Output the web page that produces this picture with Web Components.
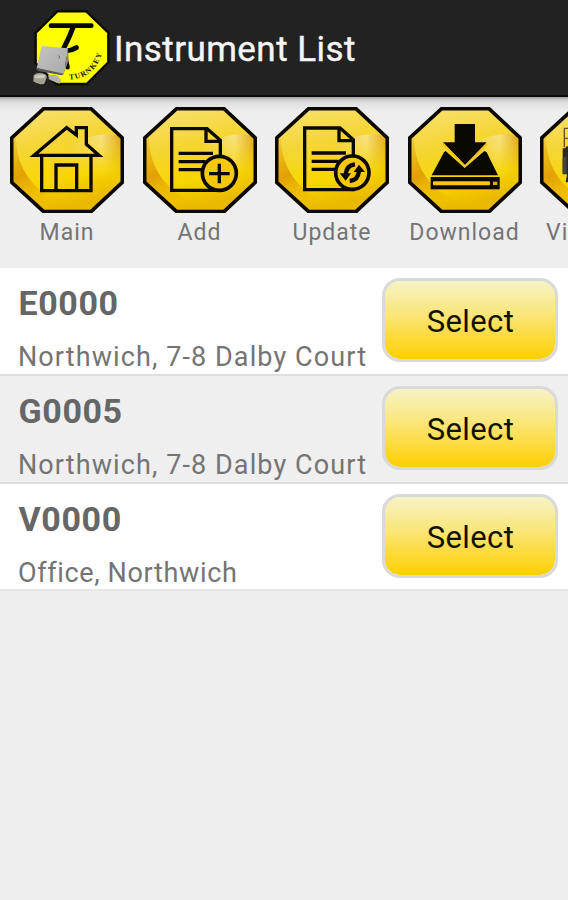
<!DOCTYPE html>
<html lang="en">
<head>
<meta charset="utf-8">
<title>Instrument List</title>
<style>
  html, body {
    margin: 0;
    height: 900px;
    overflow: hidden;
    background: #eeeeee;
    font-family: Roboto, "Liberation Sans", sans-serif;
  }
</style>
</head>
<body>
<instrument-app></instrument-app>

<script>
const page = 'M116 101 H222 L262 136 V286 H116 Z';
const arrow = `
  <path d="M270 208 Q245 210 242 238" fill="none" stroke="#0b0800" stroke-width="13"/>
  <path d="M224 235 H258 L242 257 Z" fill="#0b0800"/>`;

const icons = {
  main: `
    <g fill="none" stroke="#0b0800" stroke-width="10">
      <path d="M125 184 V287 H273 V184"/>
      <path d="M168 287 V210 H230 V287"/>
      <path d="M102 181 H297 L259 148 V98 H229 V120 L200 98 Z"/>
    </g>`,
  add: `
    <g fill="none" stroke="#0b0800" stroke-width="10">
      <path d="${page}"/>
      <path d="M219 101 V139 H262"/>
      <path d="M137 175 H240 M137 200 H218 M137 224 H207"/>
      <circle cx="259" cy="235" r="51" fill="#f5c90a" stroke-width="11"/>
      <path d="M228 236 H290 M259 206 V265"/>
    </g>`,
  update: `
    <g fill="none" stroke="#0b0800" stroke-width="10">
      <g transform="translate(3 -2)">
        <path d="${page}"/>
        <path d="M219 101 V139 H262"/>
        <path d="M137 176 H240 M137 201 H218 M137 225 H207"/>
      </g>
      <circle cx="262" cy="233" r="50" fill="#f5c90a" stroke-width="11"/>
    </g>
    ${arrow}
    <g transform="rotate(180 262 233)">${arrow}</g>`,
  download: `
    <path d="M143 168 L200 219 L259 168 L266 172 L300 241 H101 L138 172 Z" fill="#0b0800"/>
    <path d="M170 87 H231 V142 H266 L201 211 L135 142 H170 Z" fill="#0b0800"/>
    <path d="M135 146 L201 213 L268 146" fill="none" stroke="#edc21b" stroke-width="5"/>
    <rect x="98" y="246" width="207" height="37" fill="#0b0800"/>
    <rect x="105" y="259" width="171" height="12" rx="3" fill="#f3c716"/>
    <rect x="285" y="260" width="13" height="10" fill="#d5ad16"/>`,
  view: `
    <path d="M126 100 H103 V157 M103 130 H126" fill="none" stroke="#6a5510" stroke-width="4"/>
    <path d="M98 160 H105 L110 154 H240 V238 H120 L116 262 H107 L111 238 H98 Z" fill="#2b2822"/>
    <path d="M98 190 L110 182 V236 H98 Z" fill="#45423d"/>`
};

class TurnkeyLogo extends HTMLElement {
  constructor() {
    super();
    this.attachShadow({ mode: 'open' });
    this.shadowRoot.innerHTML = `
      <style>
        :host { display: block; width: 84px; height: 84px; }
        svg { display: block; width: 100%; height: 100%; }
        text { font: bold 23px "Liberation Serif", serif; letter-spacing: 3.2px; fill: #181800; }
      </style>
      <svg viewBox="0 0 252 252">
        <defs>
          <path id="arc" d="M124 223 A97 97 0 0 0 222 112"/>
          <linearGradient id="box" x1="0" y1="0" x2="1" y2="1">
            <stop offset="0" stop-color="#c4c4c4"/>
            <stop offset="1" stop-color="#a9a9a9"/>
          </linearGradient>
        </defs>
        <path d="M88 19 H175 L241 83 V172 L176 237 H85 L23 174 V84 Z" fill="#ffff00" stroke="#080800" stroke-width="7"/>
        <path d="M69 62 H190" stroke="#080800" stroke-width="14" stroke-linecap="round"/>
        <path d="M136 65 Q124 98 108 128 M110 137 Q128 139 145 128" fill="none" stroke="#080800" stroke-width="15" stroke-linecap="round"/>
        <path d="M113 160 L119 187" stroke="#080800" stroke-width="13" stroke-linecap="round"/>
        <path d="M41 123 L120 130 L107 207 L26 190 Z" fill="url(#box)"/>
        <path d="M120 130 L122 165 L107 207 Z" fill="#898989"/>
        <path d="M24 188 L108 206 L102 211 L30 198 Z" fill="#595959"/>
        <path d="M17 211 Q28 198 52 208 L57 215 L49 236 Q32 242 16 229 Z" fill="#a2a094"/>
        <path d="M19 213 Q35 205 52 211 L48 220 L22 220 Z" fill="#cbc9bd"/>
        <path d="M60 211 L84 209 L100 225 L95 236 L82 232 L63 223 Z" fill="#b5b3a7"/>
        <path d="M91 152 l5 4 l-4 5" fill="none" stroke="#6b6b6b" stroke-width="3"/>
        <text><textPath href="#arc">TURNKEY</textPath></text>
      </svg>`;
  }
}
customElements.define('turnkey-logo', TurnkeyLogo);

class ActionBar extends HTMLElement {
  constructor() {
    super();
    this.attachShadow({ mode: 'open' });
    this.shadowRoot.innerHTML = `
      <style>
        :host {
          display: flex;
          align-items: flex-start;
          gap: 2px;
          box-sizing: border-box;
          height: 97px;
          padding: 5px 0 0 28px;
          background: #222222;
          border-bottom: 2px solid #0b0b0b;
        }
        .title {
          margin-top: 24px;
          font-size: 35px;
          line-height: 42px;
          letter-spacing: 0.45px;
          color: #f5f5f5;
          -webkit-text-stroke: 0.4px #f5f5f5;
          white-space: nowrap;
        }
      </style>
      <turnkey-logo></turnkey-logo>
      <div class="title"><slot></slot></div>`;
  }
}
customElements.define('action-bar', ActionBar);

class ToolButton extends HTMLElement {
  connectedCallback() {
    this.attachShadow({ mode: 'open' });
    this.shadowRoot.innerHTML = `
      <style>
        :host {
          display: flex;
          flex: 0 0 132.5px;
          flex-direction: column;
          align-items: center;
        }
        svg { display: block; width: 114px; height: 106px; }
        .label {
          margin-top: 6px;
          font-size: 23px;
          line-height: 28px;
          letter-spacing: 1px;
          color: #747474;
          white-space: nowrap;
        }
      </style>
      <svg viewBox="30 36 342 318">
        <defs>
          <linearGradient id="base" x1="0" y1="0" x2="0.25" y2="1">
            <stop offset="0" stop-color="#f8e37a"/>
            <stop offset="0.4" stop-color="#f5d636"/>
            <stop offset="0.75" stop-color="#f8d600"/>
            <stop offset="1" stop-color="#e9b800"/>
          </linearGradient>
          <linearGradient id="left" x1="0" y1="0" x2="0.35" y2="1">
            <stop offset="0" stop-color="#e0a000" stop-opacity="0.1"/>
            <stop offset="0.55" stop-color="#dc9200" stop-opacity="0.8"/>
            <stop offset="1" stop-color="#eeb800" stop-opacity="0.2"/>
          </linearGradient>
          <linearGradient id="right" x1="0" y1="0" x2="1" y2="0">
            <stop offset="0" stop-color="#f0c840" stop-opacity="0"/>
            <stop offset="0.7" stop-color="#fae7a8" stop-opacity="0.75"/>
            <stop offset="1" stop-color="#d08c00" stop-opacity="0.8"/>
          </linearGradient>
          <linearGradient id="fade" x1="0" y1="0" x2="0" y2="1">
            <stop offset="0" stop-color="#fff"/>
            <stop offset="1" stop-color="#000"/>
          </linearGradient>
          <mask id="fademask"><rect x="150" y="110" width="222" height="140" fill="url(#fade)"/></mask>
          <clipPath id="clip"><path d="M131 41 H273 L367 129 V262 L273 350 H131 L35 262 V129 Z"/></clipPath>
        </defs>
        <g clip-path="url(#clip)">
          <rect x="30" y="36" width="342" height="318" fill="url(#base)"/>
          <path d="M30 110 H48 C44 210 90 285 190 325 L170 354 H30 Z" fill="url(#left)"/>
          <path d="M150 215 C190 160 260 112 335 118 L370 126 V250 H150 Z" fill="url(#right)" mask="url(#fademask)"/>
        </g>
        <path d="M131 41 H273 L367 129 V262 L273 350 H131 L35 262 V129 Z" fill="none" stroke="#0a0700" stroke-width="11"/>
        ${icons[this.getAttribute('icon')]}
      </svg>
      <div class="label"><slot></slot></div>`;
  }
}
customElements.define('tool-button', ToolButton);

class ToolStrip extends HTMLElement {
  constructor() {
    super();
    this.attachShadow({ mode: 'open' });
    this.shadowRoot.innerHTML = `
      <style>
        :host {
          display: flex;
          box-sizing: border-box;
          height: 171px;
          padding: 10px 0 0 0.75px;
          overflow: hidden;
          background: linear-gradient(#a0a0a0 0, #cfcfcf 3px, #e2e2e2 7px, #eeeeee 15px);
        }
      </style>
      <slot></slot>`;
  }
}
customElements.define('tool-strip', ToolStrip);

class SelectButton extends HTMLElement {
  constructor() {
    super();
    this.attachShadow({ mode: 'open' });
    this.shadowRoot.innerHTML = `
      <style>
        :host { display: block; flex: none; }
        button {
          display: block;
          box-sizing: border-box;
          width: 176px;
          height: 84px;
          padding: 2px 0 0 1px;
          border: 3px solid #d9d9d9;
          border-radius: 18px;
          background: linear-gradient(#f6f3c4, #fae67c 42%, #fed000) padding-box;
          font: 31px Roboto, "Liberation Sans", sans-serif;
          letter-spacing: 0.4px;
          color: #111100;
        }
      </style>
      <button><slot></slot></button>`;
  }
}
customElements.define('select-button', SelectButton);

class InstrumentRow extends HTMLElement {
  constructor() {
    super();
    this.attachShadow({ mode: 'open' });
    this.shadowRoot.innerHTML = `
      <style>
        :host {
          display: flex;
          justify-content: space-between;
          box-sizing: border-box;
          height: 108px;
          padding: 10px 10px 0 18px;
          background: #ffffff;
          border-bottom: 2px solid #dedede;
        }
        :host(:nth-of-type(even)) { background: #efefef; }
        :host(:last-of-type) { height: 107px; border-bottom-color: #e6e6e6; }
        .info { flex: 1; min-width: 0; white-space: nowrap; }
        .code {
          margin-top: 5px;
          padding-left: 0.5px;
          font-size: 34px;
          font-weight: 700;
          line-height: 40px;
          letter-spacing: 0.6px;
          color: #666666;
        }
        .place {
          margin-top: 18px;
          font-size: 27px;
          line-height: 32px;
          letter-spacing: var(--place-spacing, 1.1px);
          color: #747474;
        }
      </style>
      <div class="info">
        <div class="code"><slot name="code"></slot></div>
        <div class="place"><slot></slot></div>
      </div>
      <select-button>Select</select-button>`;
  }
}
customElements.define('instrument-row', InstrumentRow);

class InstrumentApp extends HTMLElement {
  constructor() {
    super();
    this.attachShadow({ mode: 'open' });
    this.shadowRoot.innerHTML = `
      <style>
        :host { display: flex; flex-direction: column; width: 568px; height: 900px; overflow: hidden; }
        action-bar, tool-strip, instrument-row { flex: none; }
        instrument-row:last-of-type { --place-spacing: 0.65px; }
      </style>
      <action-bar>Instrument List</action-bar>
      <tool-strip>
        <tool-button icon="main">Main</tool-button>
        <tool-button icon="add">Add</tool-button>
        <tool-button icon="update">Update</tool-button>
        <tool-button icon="download">Download</tool-button>
        <tool-button icon="view">View Log</tool-button>
      </tool-strip>
      <instrument-row><span slot="code">E0000</span>Northwich, 7-8 Dalby Court</instrument-row>
      <instrument-row><span slot="code">G0005</span>Northwich, 7-8 Dalby Court</instrument-row>
      <instrument-row><span slot="code">V0000</span>Office, Northwich</instrument-row>`;
  }
}
customElements.define('instrument-app', InstrumentApp);
</script>
</body>
</html>
